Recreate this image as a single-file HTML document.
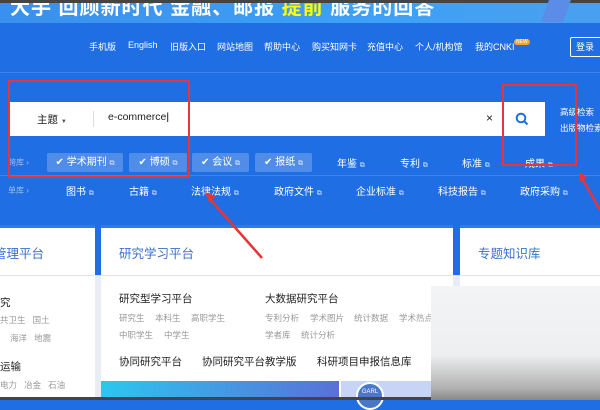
<!DOCTYPE html>
<html><head><meta charset="utf-8"><style>
*{margin:0;padding:0;box-sizing:border-box}
body{width:600px;height:400px;overflow:hidden;position:relative;background:#1f6ee3;font-family:"Liberation Sans","Noto Sans CJK SC",sans-serif}
.a{position:absolute;white-space:nowrap}
.w{color:#fff;font-size:9px;top:40px}
.chip{position:absolute;top:153px;height:19px;background:rgba(255,255,255,.22);border-radius:2px;color:#fff;font-size:10px;line-height:19px;text-align:center;white-space:nowrap}
.t{color:#fff;font-size:10px;top:155px}
.r2{color:#fff;font-size:10px;top:183px}
.ext{font-size:7px;opacity:.8}
.card{position:absolute;top:225px;background:#fff;border-top:3px solid #2d7be8}
.g{color:#999;font-size:8.5px}
.b{color:#222;font-size:10.5px}
</style></head><body>
<div class="a" style="left:0;top:0;width:600px;height:23px;background:linear-gradient(90deg,#3a90ee,#3da0f6 60%,#4aa0f0)"></div>
<div class="a" style="left:10px;top:-9px;color:#fff;font-size:20px;font-weight:bold;letter-spacing:1px">大手 回顾新时代 金融、邮报 <span style="color:#ff0">提前</span> 服务的回答</div>
<div class="a" style="left:0;top:0;width:600px;height:3px;background:#444"></div>
<div class="a" style="left:545px;top:0;width:22px;height:22px;background:#5a8ce8;transform:skewX(-20deg)"></div>
<div class="a" style="left:0;top:72px;width:600px;height:1px;background:rgba(255,255,255,.15)"></div>
<div class="a w" style="left:89px">手机版</div>
<div class="a w" style="left:128px">English</div>
<div class="a w" style="left:170px">旧版入口</div>
<div class="a w" style="left:217px">网站地图</div>
<div class="a w" style="left:264px">帮助中心</div>
<div class="a w" style="left:312px">购买知网卡</div>
<div class="a w" style="left:367px">充值中心</div>
<div class="a w" style="left:415px">个人/机构馆</div>
<div class="a w" style="left:475px">我的CNKI</div>
<div class="a" style="left:514px;top:39px;background:#f5a623;color:#fff;font-size:5px;padding:0 2px;border-radius:3px">NEW</div>
<div class="a" style="left:570px;top:37px;width:40px;height:20px;border:1px solid #fff;border-radius:2px;color:#fff;font-size:9px;line-height:18px;padding-left:5px">登录</div>
<div class="a" style="left:9px;top:102px;width:536px;height:34px;background:#fff"></div>
<div class="a" style="left:37px;top:112px;font-size:10.5px;color:#222">主题 <span style="font-size:6px;color:#555">▼</span></div>
<div class="a" style="left:93px;top:111px;width:1px;height:16px;background:#ddd"></div>
<div class="a" style="left:108px;top:111px;font-size:10.5px;color:#222">e-commerce<span style="color:#000">|</span></div>
<div class="a" style="left:486px;top:111px;font-size:12px;color:#222">×</div>
<svg class="a" style="left:515px;top:112px" width="14" height="14" viewBox="0 0 14 14"><circle cx="6" cy="6" r="4.3" fill="none" stroke="#1e6fe0" stroke-width="2"/><path d="M9 9l3.5 3.5" stroke="#1e6fe0" stroke-width="2"/></svg>
<div class="a" style="left:560px;top:106px;color:#fff;font-size:8.5px">高级检索</div>
<div class="a" style="left:560px;top:122px;color:#fff;font-size:8.5px">出版物检索</div>
<div class="a" style="left:8px;top:157px;color:rgba(255,255,255,.55);font-size:8px">跨库 ›</div>
<div class="chip" style="left:47px;width:76px">✔ 学术期刊 <span class="ext">⧉</span></div>
<div class="chip" style="left:129px;width:58px">✔ 博硕 <span class="ext">⧉</span></div>
<div class="chip" style="left:192px;width:57px">✔ 会议 <span class="ext">⧉</span></div>
<div class="chip" style="left:255px;width:57px">✔ 报纸 <span class="ext">⧉</span></div>
<div class="a t" style="left:337px">年鉴 <span class="ext">⧉</span></div>
<div class="a t" style="left:400px">专利 <span class="ext">⧉</span></div>
<div class="a t" style="left:462px">标准 <span class="ext">⧉</span></div>
<div class="a t" style="left:525px">成果 <span class="ext">⧉</span></div>
<div class="a" style="left:0;top:175px;width:600px;height:1px;background:rgba(255,255,255,.15)"></div>
<div class="a" style="left:8px;top:185px;color:rgba(255,255,255,.55);font-size:8px">单库 ›</div>
<div class="a r2" style="left:66px">图书 <span class="ext">⧉</span></div>
<div class="a r2" style="left:129px">古籍 <span class="ext">⧉</span></div>
<div class="a r2" style="left:191px">法律法规 <span class="ext">⧉</span></div>
<div class="a r2" style="left:274px">政府文件 <span class="ext">⧉</span></div>
<div class="a r2" style="left:356px">企业标准 <span class="ext">⧉</span></div>
<div class="a r2" style="left:438px">科技报告 <span class="ext">⧉</span></div>
<div class="a r2" style="left:520px">政府采购 <span class="ext">⧉</span></div>
<div class="a" style="left:0;top:276px;width:600px;height:124px;background:#e9edf3"></div>
<div class="card" style="left:-5px;width:100px;height:175px"></div>
<div class="card" style="left:101px;width:352px;height:175px"></div>
<div class="card" style="left:460px;width:141px;height:175px"></div>
<div class="a" style="left:0;top:275px;width:600px;height:1px;background:#e3e3e3"></div>
<div class="a" style="left:-6px;top:243px;color:#3a6fd0;font-size:12.5px">管理平台</div>
<div class="a" style="left:119px;top:243px;color:#3a6fd0;font-size:12.5px">研究学习平台</div>
<div class="a" style="left:478px;top:243px;color:#3a6fd0;font-size:12.5px">专题知识库</div>
<div class="a b" style="left:0;top:295px">究</div>
<div class="a g" style="left:0;top:314px">共卫生 &nbsp;&nbsp;国土</div>
<div class="a g" style="left:10px;top:332px">海洋 &nbsp;&nbsp;地震</div>
<div class="a b" style="left:0;top:359px">运输</div>
<div class="a g" style="left:0;top:379px">电力 &nbsp;&nbsp;冶金 &nbsp;&nbsp;石油</div>
<div class="a b" style="left:119px;top:291px">研究型学习平台</div>
<div class="a g" style="left:119px;top:312px">研究生</div><div class="a g" style="left:155px;top:312px">本科生</div><div class="a g" style="left:191px;top:312px">高职学生</div>
<div class="a g" style="left:119px;top:329px">中职学生</div><div class="a g" style="left:164px;top:329px">中学生</div>
<div class="a b" style="left:265px;top:291px">大数据研究平台</div>
<div class="a g" style="left:265px;top:312px">专利分析</div><div class="a g" style="left:310px;top:312px">学术图片</div><div class="a g" style="left:354px;top:312px">统计数据</div><div class="a g" style="left:399px;top:312px">学术热点</div>
<div class="a g" style="left:265px;top:329px">学者库</div><div class="a g" style="left:301px;top:329px">统计分析</div>
<div class="a b" style="left:119px;top:354px">协同研究平台</div>
<div class="a b" style="left:202px;top:354px">协同研究平台教学版</div>
<div class="a b" style="left:317px;top:354px">科研项目申报信息库</div>
<div class="a" style="left:101px;top:381px;width:238px;height:19px;background:linear-gradient(90deg,#2cc6f0,#5a70d8)"></div>
<div class="a" style="left:341px;top:381px;width:92px;height:19px;background:#c8d4f6"></div>
<div class="a" style="left:356px;top:382px;width:28px;height:28px;border-radius:50%;background:#4a78c8;border:2px solid #fff;color:#fff;font-size:6px;text-align:center;line-height:16px">GARL</div>
<div class="a" style="left:431px;top:286px;width:169px;height:114px;background:linear-gradient(180deg,#f3f4f5 0%,#eeeff0 60%,#b0b0b0 90%,#888 100%)"></div>
<div class="a" style="left:0;top:397px;width:431px;height:3px;background:#444"></div>
<div class="a" style="left:8px;top:80px;width:182px;height:98px;border:2px solid #e8343a"></div>
<div class="a" style="left:502px;top:84px;width:75px;height:82px;border:2px solid #e8343a"></div>
<svg class="a" style="left:0;top:0" width="600" height="400"><path d="M209 198 L262 258" stroke="#e8343a" stroke-width="2.5"/><path d="M205 192 l11 4 -7 6z" fill="#e8343a"/><path d="M582 178 L600 210" stroke="#e8343a" stroke-width="2.5"/><path d="M579 172 l8 5 -7 5z" fill="#e8343a"/></svg>
</body></html>
